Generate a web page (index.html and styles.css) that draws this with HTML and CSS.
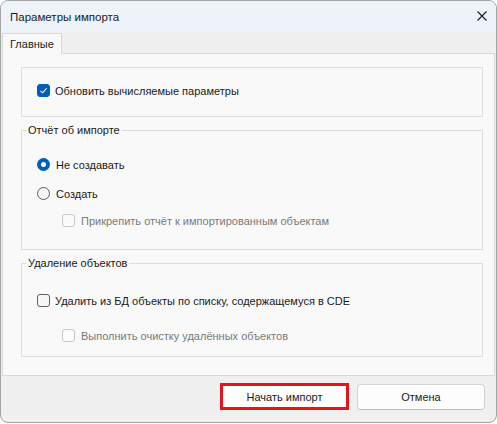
FILE: index.html
```html
<!DOCTYPE html>
<html lang="ru">
<head>
  <meta charset="UTF-8"/>
  <title>Параметры импорта</title>
  <link rel="stylesheet" href="styles.css">
</head>
<body>
  <div class="dialog">
    <!-- Заголовок окна -->
    <div class="titlebar">
      <span class="title">Параметры импорта</span>
      <span class="close">
        <svg width="10" height="10" viewBox="0 0 10 10"><path d="M0.5 0.5 L9.5 9.5 M9.5 0.5 L0.5 9.5" stroke="#1a1a1a" stroke-width="1.1" fill="none"/></svg>
      </span>
    </div>

    <!-- Вкладки -->
    <div class="content">
      <div class="tabs">
        <div class="tab active">Главные</div>
      </div>
      <div class="tab-page">
        <div class="group">
          <label class="row">
            <span class="check checked"><svg width="13" height="13" viewBox="0 0 13 13"><path d="M3.5 6.8 L5.6 8.8 L9.6 4.4" stroke="#fff" stroke-width="1.1" fill="none"/></svg></span>
            Обновить вычисляемые параметры
          </label>
        </div>

        <fieldset class="group report">
          <legend>Отчёт об импорте</legend>
          <label class="row first"><span class="radio checked"></span>Не создавать</label>
          <label class="row second"><span class="radio"></span>Создать</label>
          <label class="row sub disabled"><span class="check"></span>Прикрепить отчёт к импортированным объектам</label>
        </fieldset>

        <fieldset class="group removal">
          <legend>Удаление объектов</legend>
          <label class="row first"><span class="check"></span>Удалить из БД объекты по списку, содержащемуся в CDE</label>
          <label class="row sub disabled"><span class="check"></span>Выполнить очистку удалённых объектов</label>
        </fieldset>
      </div>
    </div>

    <!-- Кнопки -->
    <div class="footer">
      <button class="btn primary">Начать импорт</button>
      <button class="btn">Отмена</button>
    </div>
  </div>
</body>
</html>
```

FILE: styles.css
```css
* { box-sizing: border-box; margin: 0; padding: 0; }
body {
  background: #fff;
  font-family: "Liberation Sans", Arial, sans-serif;
  font-size: 11px; color: #1a1a1a;
}

/* Окно */
.dialog {
  width: 497px; height: 423px;
  border: 1px solid #a4a4a4; border-radius: 8px;
  overflow: hidden; background: #f0f0f0;
  display: flex; flex-direction: column;
}
.titlebar {
  flex: 0 0 30px;
  display: flex; align-items: center;
  padding: 2px 9px 0 9px;
  background: #eef3f9;
}
.title { flex: 1; font-size: 11.5px; }
.close { display: flex; margin-top: -2px; }

/* Вкладки */
.content { flex: 0 0 auto; padding: 2px 1px 0 1px; }
.tabs { display: flex; }
.tab {
  position: relative; z-index: 1;
  width: 60px; height: 21px; margin-bottom: -1px;
  padding-left: 7px; line-height: 20px;
  background: #f9f9f9;
  border: 1px solid #d9d9d9; border-bottom: none;
}
.tab-page {
  height: 323px;
  background: #f9f9f9; border: 1px solid #d9d9d9;
  padding: 13px 11px 17px 18px;
}

/* Группы */
.group {
  border: 1px solid #dcdcdc;
  padding: 14px 10px 17px 4px;
  min-width: 0;
}
.group + .group { margin-top: 6px; }
.group legend { padding: 0 2px; line-height: 15px; }
.report { padding-top: 18px; padding-bottom: 20px; }
.removal { padding-top: 21px; padding-bottom: 12px; }

.row {
  display: flex; align-items: center; gap: 5px;
  height: 17px; margin-left: 11px;
}
.report .second { margin-top: 12px; }
.report .sub { margin-top: 10px; }
.removal .sub { margin-top: 18px; }
.row.sub { margin-left: 36px; gap: 6px; }
.row.disabled { color: #7a7a7a; }

/* Флажки и переключатели */
.check {
  flex: 0 0 13px; width: 13px; height: 13px;
  border: 1px solid #616161; border-radius: 3px;
  background: #f7f7f7; display: flex;
}
.check.checked { background: #005fb8; border-color: #005fb8; }
.check.checked svg { margin: -1px; }
.row.disabled .check { border-color: #c8c8c8; background: #fbfbfb; }

.radio {
  flex: 0 0 13px; width: 13px; height: 13px;
  border: 1px solid #5f5f5f; border-radius: 50%;
  background: #f7f7f7;
}
.radio.checked {
  border: 4px solid #005fb8; background: #fff;
}
.row .radio { margin-right: 1px; }

/* Нижняя панель */
.footer {
  flex: 1;
  display: flex; align-items: flex-start; justify-content: flex-end;
  gap: 8px; padding: 7px 11px 0 0;
}
.btn {
  width: 128px; height: 26px; margin-top: 1px;
  font: inherit; color: #1a1a1a;
  background: #fdfdfd;
  border: 1px solid #d3d3d3; border-bottom-color: #c2c2c2;
  border-radius: 4px;
}
.btn.primary {
  width: 129px; height: 27px; margin-top: 0;
  background: #fff;
  border: 3px solid #e5131d; border-radius: 0;
}
```
